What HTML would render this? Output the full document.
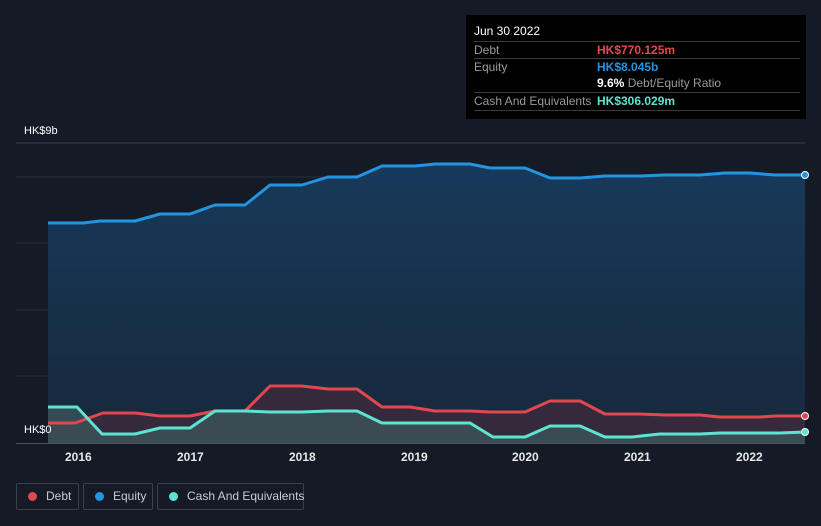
<!DOCTYPE html>
<html><head><style>
body{margin:0;width:821px;height:526px;background:#151b26;font-family:"Liberation Sans",sans-serif;overflow:hidden;position:relative}
.tt{position:absolute;left:466px;top:15px;width:340px;height:104px;background:#000;color:#fff;font-size:12px}
.row{position:absolute;left:8px;width:326px;border-top:1px solid #3a3a3a;height:17px;line-height:17px}
.lab{color:#9a9a9a}
.v{position:absolute;left:123px;top:0;font-weight:bold}
.leg{position:absolute;top:483px;height:27px;border:1px solid #3b404a;border-radius:2px;color:#c8ccd2;font-size:12px;line-height:25px;box-sizing:border-box;white-space:nowrap}
.dot{display:inline-block;width:9px;height:9px;border-radius:50%;margin:0 9px 0 11px;vertical-align:-1px}
.yr{position:absolute;top:450px;color:#e6e6e6;font-size:12px;font-weight:bold}
</style></head><body>
<svg width="821" height="526" style="position:absolute;left:0;top:0">
<defs>
<linearGradient id="eq" x1="0" y1="0" x2="0" y2="1"><stop offset="0" stop-color="#17395a"/><stop offset="1" stop-color="#17283b"/></linearGradient>
</defs>
<line x1="16" y1="143" x2="805" y2="143" stroke="#3a404b"/>
<g stroke="#262d3a"><line x1="16" y1="177" x2="805" y2="177"/><line x1="16" y1="243" x2="805" y2="243"/><line x1="16" y1="310" x2="805" y2="310"/><line x1="16" y1="376" x2="805" y2="376"/></g>
<polygon fill="url(#eq)" points="48,443 48,223 83,223 100,221 135,221 160,214 190,214 215,205 245,205 270,185 302,185 328,177 357,177 382,166 415,166 435,164 470,164 490,168 525,168 550,178 580,178 605,176 640,176 665,175 700,175 725,173 750,173 775,175 805,175 805,443"/>
<polygon fill="#3b2a3b" opacity="0.85" points="48,443 48,423 75,423 103,413 135,413 160,416 190,416 215,411 245,411 270,386 302,386 328,389 357,389 382,407 410,407 435,411 470,411 490,412 525,412 550,401 580,401 605,414 640,414 665,415 700,415 720,417 760,417 775,416 805,416 805,443"/>
<polygon fill="#3f5a60" opacity="0.7" points="48,443 48,407 77,407 102,434 135,434 160,428 190,428 215,411 245,411 270,412 302,412 328,411 357,411 382,423 410,423 435,423 470,423 493,437 525,437 550,426 580,426 605,437 632,437 660,434 700,434 720,433 780,433 805,432 805,443"/>
<polyline fill="none" stroke="#2394e0" stroke-width="3" stroke-linejoin="round" points="48,223 83,223 100,221 135,221 160,214 190,214 215,205 245,205 270,185 302,185 328,177 357,177 382,166 415,166 435,164 470,164 490,168 525,168 550,178 580,178 605,176 640,176 665,175 700,175 725,173 750,173 775,175 805,175"/>
<polyline fill="none" stroke="#e0474f" stroke-width="3" stroke-linejoin="round" points="48,423 75,423 103,413 135,413 160,416 190,416 215,411 245,411 270,386 302,386 328,389 357,389 382,407 410,407 435,411 470,411 490,412 525,412 550,401 580,401 605,414 640,414 665,415 700,415 720,417 760,417 775,416 805,416"/>
<polyline fill="none" stroke="#5ee3d0" stroke-width="3" stroke-linejoin="round" points="48,407 77,407 102,434 135,434 160,428 190,428 215,411 245,411 270,412 302,412 328,411 357,411 382,423 410,423 435,423 470,423 493,437 525,437 550,426 580,426 605,437 632,437 660,434 700,434 720,433 780,433 805,432"/>
<line x1="16" y1="443.5" x2="805" y2="443.5" stroke="#4a505a"/>
<circle cx="805" cy="175" r="3.5" fill="#2394e0" stroke="#fff" stroke-width="1"/>
<circle cx="805" cy="416" r="3.5" fill="#e0474f" stroke="#fff" stroke-width="1"/>
<circle cx="805" cy="432" r="3.5" fill="#5ee3d0" stroke="#fff" stroke-width="1"/>
</svg>
<div style="position:absolute;left:24px;top:125px;color:#fff;font-size:11px">HK$9b</div>
<div style="position:absolute;left:24px;top:424px;color:#fff;font-size:11px">HK$0</div>
<div class="yr" style="left:65px">2016</div><div class="yr" style="left:177px">2017</div><div class="yr" style="left:289px">2018</div><div class="yr" style="left:401px">2019</div><div class="yr" style="left:512px">2020</div><div class="yr" style="left:624px">2021</div><div class="yr" style="left:736px">2022</div>
<div class="tt">
<div style="position:absolute;left:8px;top:9px">Jun 30 2022</div>
<div class="row lab" style="top:26px">Debt<span class="v" style="color:#e8464c">HK$770.125m</span></div>
<div class="row lab" style="top:43px;border-top:1px solid #3a3a3a">Equity<span class="v" style="color:#2394e0">HK$8.045b</span></div>
<div class="row lab" style="top:60px;border-top:none"><span class="v" style="color:#fff">9.6% <span style="color:#9a9a9a;font-weight:normal">Debt/Equity Ratio</span></span></div>
<div class="row lab" style="top:77px;border-bottom:1px solid #3a3a3a">Cash And Equivalents<span class="v" style="color:#5ee3d0">HK$306.029m</span></div>
</div>
<div class="leg" style="left:16px;width:63px"><span class="dot" style="background:#e0474f"></span>Debt</div>
<div class="leg" style="left:83px;width:70px"><span class="dot" style="background:#2394e0"></span>Equity</div>
<div class="leg" style="left:157px;width:147px"><span class="dot" style="background:#5ee3d0"></span>Cash And Equivalents</div>
</body></html>
